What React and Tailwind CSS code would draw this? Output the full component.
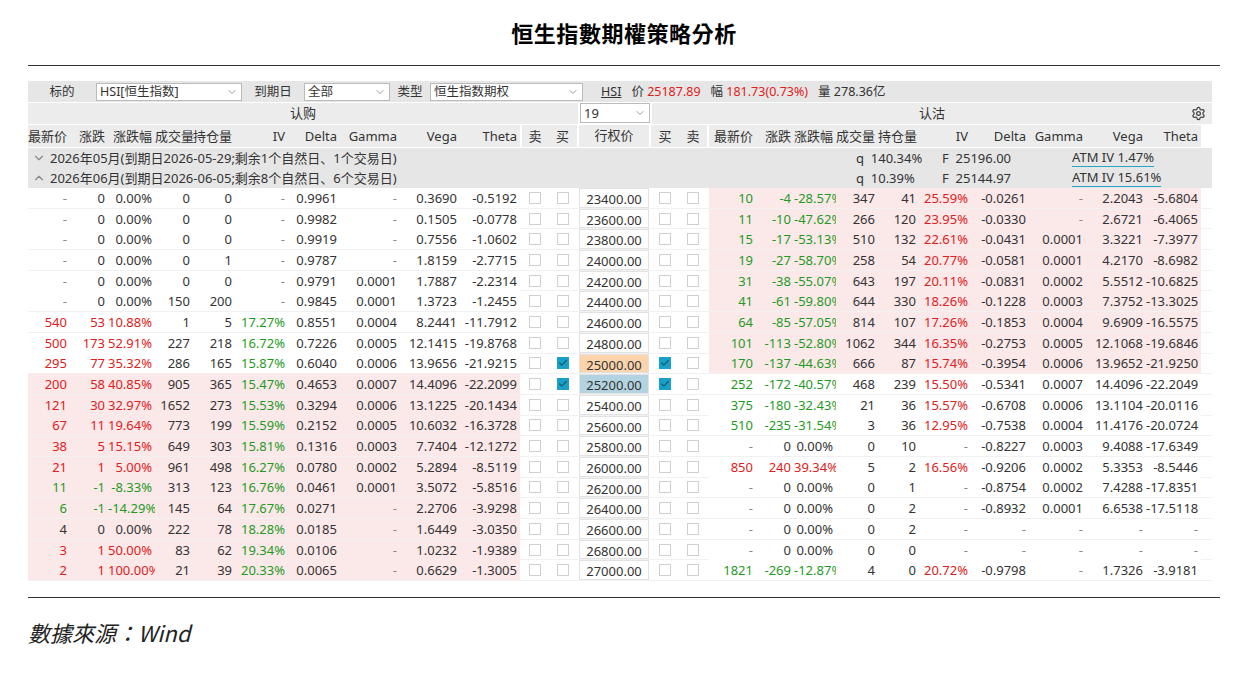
import React from 'react';
import { Settings, ChevronDown, ChevronUp, Check } from 'lucide-react';

const LW = [42, 38, 47, 38, 42, 53, 52, 60, 60, 60];
const RW = [47, 38, 42, 42, 41, 52, 58, 57, 60, 55];
const LH = ['最新价', '涨跌', '涨跌幅', '成交量', '持仓量', 'IV', 'Delta', 'Gamma', 'Vega', 'Theta'];

const rows = [
  ['- 0 0.00% 0 0 - 0.9961 - 0.3690 -0.5192', '23400.00', '10 -4 -28.57% 347 41 25.59% -0.0261 - 2.2043 -5.6804'],
  ['- 0 0.00% 0 0 - 0.9982 - 0.1505 -0.0778', '23600.00', '11 -10 -47.62% 266 120 23.95% -0.0330 - 2.6721 -6.4065'],
  ['- 0 0.00% 0 0 - 0.9919 - 0.7556 -1.0602', '23800.00', '15 -17 -53.13% 510 132 22.61% -0.0431 0.0001 3.3221 -7.3977'],
  ['- 0 0.00% 0 1 - 0.9787 - 1.8159 -2.7715', '24000.00', '19 -27 -58.70% 258 54 20.77% -0.0581 0.0001 4.2170 -8.6982'],
  ['- 0 0.00% 0 0 - 0.9791 0.0001 1.7887 -2.2314', '24200.00', '31 -38 -55.07% 643 197 20.11% -0.0831 0.0002 5.5512 -10.6825'],
  ['- 0 0.00% 150 200 - 0.9845 0.0001 1.3723 -1.2455', '24400.00', '41 -61 -59.80% 644 330 18.26% -0.1228 0.0003 7.3752 -13.3025'],
  ['540 53 10.88% 1 5 17.27% 0.8551 0.0004 8.2441 -11.7912', '24600.00', '64 -85 -57.05% 814 107 17.26% -0.1853 0.0004 9.6909 -16.5575'],
  ['500 173 52.91% 227 218 16.72% 0.7226 0.0005 12.1415 -19.8768', '24800.00', '101 -113 -52.80% 1062 344 16.35% -0.2753 0.0005 12.1068 -19.6846'],
  ['295 77 35.32% 286 165 15.87% 0.6040 0.0006 13.9656 -21.9215', '25000.00', '170 -137 -44.63% 666 87 15.74% -0.3954 0.0006 13.9652 -21.9250'],
  ['200 58 40.85% 905 365 15.47% 0.4653 0.0007 14.4096 -22.2099', '25200.00', '252 -172 -40.57% 468 239 15.50% -0.5341 0.0007 14.4096 -22.2049'],
  ['121 30 32.97% 1652 273 15.53% 0.3294 0.0006 13.1225 -20.1434', '25400.00', '375 -180 -32.43% 21 36 15.57% -0.6708 0.0006 13.1104 -20.0116'],
  ['67 11 19.64% 773 199 15.59% 0.2152 0.0005 10.6032 -16.3728', '25600.00', '510 -235 -31.54% 3 36 12.95% -0.7538 0.0004 11.4176 -20.0724'],
  ['38 5 15.15% 649 303 15.81% 0.1316 0.0003 7.7404 -12.1272', '25800.00', '- 0 0.00% 0 10 - -0.8227 0.0003 9.4088 -17.6349'],
  ['21 1 5.00% 961 498 16.27% 0.0780 0.0002 5.2894 -8.5119', '26000.00', '850 240 39.34% 5 2 16.56% -0.9206 0.0002 5.3353 -8.5446'],
  ['11 -1 -8.33% 313 123 16.76% 0.0461 0.0001 3.5072 -5.8516', '26200.00', '- 0 0.00% 0 1 - -0.8754 0.0002 7.4288 -17.8351'],
  ['6 -1 -14.29% 145 64 17.67% 0.0271 - 2.2706 -3.9298', '26400.00', '- 0 0.00% 0 2 - -0.8932 0.0001 6.6538 -17.5118'],
  ['4 0 0.00% 222 78 18.28% 0.0185 - 1.6449 -3.0350', '26600.00', '- 0 0.00% 0 2 - - - - -'],
  ['3 1 50.00% 83 62 19.34% 0.0106 - 1.0232 -1.9389', '26800.00', '- 0 0.00% 0 0 - - - - -'],
  ['2 1 100.00% 21 39 20.33% 0.0065 - 0.6629 -1.3005', '27000.00', '1821 -269 -12.87% 4 0 20.72% -0.9798 - 1.7326 -3.9181'],
];

function cellColor(vals, i, side) {
  const v = vals[i];
  if (v === '-') return 'text-[#888]';
  const ch = parseFloat(vals[1]);
  if (i <= 2) return ch > 0 ? 'text-[#e02020]' : ch < 0 ? 'text-[#1f9a1f]' : 'text-[#333]';
  if (i === 5) return side === 'L' ? 'text-[#1f9a1f]' : 'text-[#e02020]';
  return 'text-[#333]';
}

function Box({ checked }) {
  return checked ? (
    <span className="w-[12px] h-[12px] bg-[#1aa0c8] flex items-center justify-center">
      <Check size={10} strokeWidth={3} className="text-[#0b5f78]" />
    </span>
  ) : (
    <span className="w-[12px] h-[12px] border border-[#d0d0d0] bg-white" />
  );
}

function Side({ vals, widths, side, pink }) {
  return (
    <div className={`flex ${pink ? 'bg-[#fbe8e9]' : 'bg-white'}`}>
      {vals.map((v, i) => (
        <div key={i} style={{ width: widths[i] }} className={`text-right pr-[3px] whitespace-nowrap overflow-hidden ${cellColor(vals, i, side)}`}>{v}</div>
      ))}
    </div>
  );
}

export default function App() {
  return (
    <div className="w-[1248px] h-[674px] bg-white text-[13px] text-[#333]" style={{ fontFamily: '"Noto Sans", "Noto Sans CJK SC", sans-serif' }}>
      <div className="h-[66px] mx-[28px] border-b border-[#333] flex items-center justify-center">
        <h1 className="text-[22px] font-bold text-black tracking-wide" style={{ fontFamily: '"Noto Sans CJK TC", sans-serif' }}>恒生指數期權策略分析</h1>
      </div>
      <div className="mx-[28px] mt-[15px] w-[1184px] leading-[20px]">
        <div className="h-[21px] bg-[#e6e6e6] flex items-center text-[12.5px]">
          <span className="w-[68px] text-center">标的</span>
          <div className="w-[146px] h-[18px] bg-white border border-[#bbb] flex items-center justify-between px-[3px]">HSI[恒生指数]<ChevronDown size={12} className="text-[#999]" /></div>
          <span className="w-[62px] text-center">到期日</span>
          <div className="w-[86px] h-[18px] bg-white border border-[#bbb] flex items-center justify-between px-[3px]">全部<ChevronDown size={12} className="text-[#999]" /></div>
          <span className="w-[40px] text-center">类型</span>
          <div className="w-[153px] h-[18px] bg-white border border-[#bbb] flex items-center justify-between px-[3px]">恒生指数期权<ChevronDown size={12} className="text-[#999]" /></div>
          <span className="ml-[18px] underline">HSI</span>
          <span className="ml-[10px]">价 <span className="text-[#e02020]">25187.89</span></span>
          <span className="ml-[10px]">幅 <span className="text-[#e02020]">181.73(0.73%)</span></span>
          <span className="ml-[10px]">量 278.36亿</span>
        </div>
        <div className="h-[22px] flex items-center">
          <div className="w-[550px] h-[21px] bg-[#ececec] text-center">认购</div>
          <div className="w-[70px] h-[20px] mx-[2px] border border-[#bbb] bg-white flex items-center justify-between px-[3px]">19<ChevronDown size={12} className="text-[#999]" /></div>
          <div className="flex-1 h-[21px] bg-[#ececec] relative text-center">认沽
            <Settings size={15} className="absolute right-[6px] top-[3px] text-[#444]" />
          </div>
        </div>
        <div className="h-[23px] flex items-center bg-white">
          <div className="flex bg-[#ececec] h-[22px] items-center">
            {LH.map((h, i) => <div key={i} style={{ width: LW[i] }} className="text-right pr-[3px] whitespace-nowrap">{h}</div>)}
          </div>
          <div className="flex h-[22px] items-center bg-[#ececec] ml-[2px]"><div className="w-[26px] text-center">卖</div><div className="w-[29px] text-center">买</div></div>
          <div className="w-[70px] h-[22px] bg-[#ececec] text-center ml-[2px]">行权价</div>
          <div className="flex h-[22px] items-center bg-[#ececec] ml-[2px]"><div className="w-[28px] text-center">买</div><div className="w-[28px] text-center">卖</div></div>
          <div className="flex bg-[#ececec] h-[22px] items-center ml-[2px]">
            {LH.map((h, i) => <div key={i} style={{ width: RW[i] }} className="text-right pr-[3px] whitespace-nowrap">{h}</div>)}
          </div>
        </div>
        {[['d', '2026年05月(到期日2026-05-29;剩余1个自然日、1个交易日)', '140.34%', '25196.00', '1.47%'],
          ['u', '2026年06月(到期日2026-06-05;剩余8个自然日、6个交易日)', '10.39%', '25144.97', '15.61%']].map(([d, t, q, f, a]) => (
          <div key={t} className="h-[20px] mt-[0.5px] bg-[#e6e6e6] flex items-center">
            <span className="w-[22px] flex justify-center text-[#888]">{d === 'd' ? <ChevronDown size={14} /> : <ChevronUp size={14} />}</span>
            <span className="w-[806px]">{t}</span>
            <span className="w-[86px]">q&nbsp;&nbsp;{q}</span>
            <span className="w-[130px]">F&nbsp;&nbsp;{f}</span>
            <span className="border-b border-[#2aa3c8] leading-[17px]">ATM IV {a}</span>
          </div>
        ))}
        <div>
          {rows.map(([l, k, r], idx) => {
            const lv = l.split(' '), rv = r.split(' ');
            const sel = idx === 8 || idx === 9;
            return (
              <div key={k} className="h-[20.7px] flex items-center border-b border-[#f1f1f1]">
                <Side vals={lv} widths={LW} side="L" pink={idx >= 9} />
                <div className="flex h-full items-center ml-[2px]"><div className="w-[26px] flex justify-center"><Box /></div><div className="w-[29px] flex justify-center"><Box checked={sel} /></div></div>
                <div className={`w-[70px] h-full text-center ml-[2px] border border-[#e2e2e2] ${idx === 8 ? 'bg-[#fcd4ab]' : idx === 9 ? 'bg-[#b2d3df]' : 'bg-white'}`}>{k}</div>
                <div className="flex h-full items-center ml-[2px]"><div className="w-[28px] flex justify-center"><Box checked={sel} /></div><div className="w-[28px] flex justify-center"><Box /></div></div>
                <div className="ml-[2px]"><Side vals={rv} widths={RW} side="R" pink={idx <= 8} /></div>
              </div>
            );
          })}
        </div>
      </div>
      <div className="mx-[28px] mt-[16px] border-t border-[#333]" />
      <div className="ml-[28px] mt-[18px] text-[22px] italic text-[#222]" style={{ fontFamily: '"Noto Sans CJK TC", sans-serif' }}>數據來源：Wind</div>
    </div>
  );
}
